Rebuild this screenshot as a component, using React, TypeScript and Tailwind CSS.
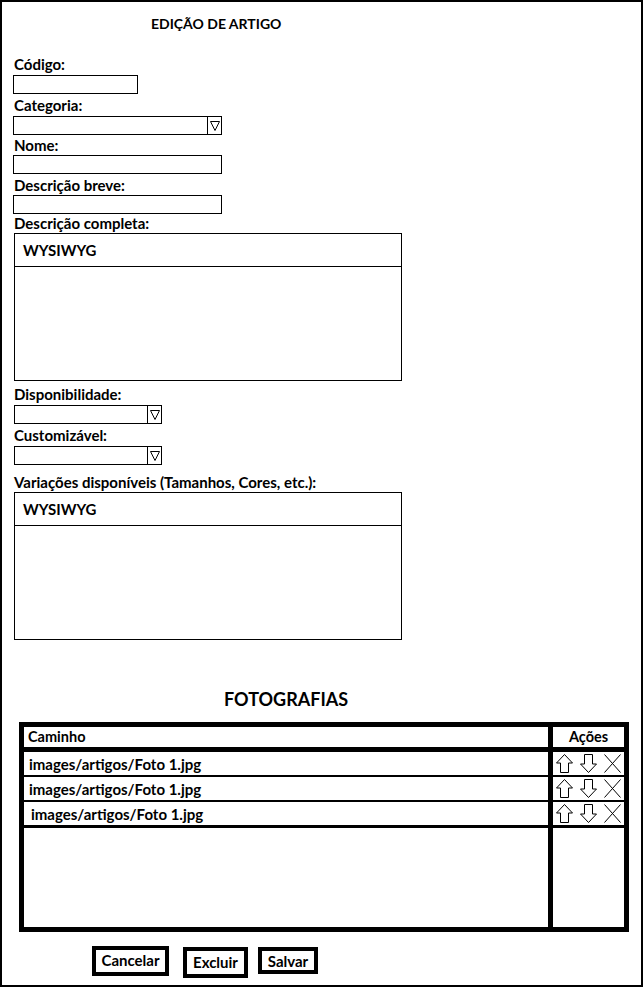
import React from "react";

const Tri = () => (
  <svg width="10" height="10" viewBox="0 0 10 10">
    <polygon points="0.5,0.5 9.5,0.5 5,9.5" fill="none" stroke="black" strokeWidth="1" />
  </svg>
);

const Select = ({ w }: { w: string }) => (
  <div className={`flex h-[19px] ${w} border border-black`}>
    <div className="flex-1" />
    <div className="flex w-[14px] items-center justify-center border-l border-black pt-px">
      <Tri />
    </div>
  </div>
);

const Label = ({ children, cls }: { children: React.ReactNode; cls: string }) => (
  <div className={`ml-px h-[16px] whitespace-nowrap text-[15px] leading-[16px] ${cls}`}>{children}</div>
);

const Wysiwyg = () => (
  <div className="ml-px flex h-[148px] w-[388px] flex-col border border-black">
    <div className="flex h-[33px] items-center border-b border-black pl-[8px] text-[15px] leading-[16px]">
      WYSIWYG
    </div>
  </div>
);

const Up = () => (
  <svg width="17" height="19" viewBox="0 0 17 19">
    <polygon
      points="8.5,0.5 16.5,9 12.5,9 12.5,18.5 4.5,18.5 4.5,9 0.5,9"
      fill="none"
      stroke="black"
      strokeWidth="1"
    />
  </svg>
);

const Down = () => (
  <svg width="17" height="19" viewBox="0 0 17 19">
    <polygon
      points="4.5,0.5 12.5,0.5 12.5,10 16.5,10 8.5,18.5 0.5,10 4.5,10"
      fill="none"
      stroke="black"
      strokeWidth="1"
    />
  </svg>
);

const Xi = () => (
  <svg width="17" height="19" viewBox="0 0 17 19">
    <line x1="0.5" y1="0.5" x2="16.5" y2="18.5" stroke="black" strokeWidth="1" />
    <line x1="16.5" y1="0.5" x2="0.5" y2="18.5" stroke="black" strokeWidth="1" />
  </svg>
);

const Row = ({ pl, mt }: { pl: string; mt: string }) => (
  <div className={`grid grid-cols-[524px_71px] gap-x-[5px] ${mt}`}>
    <div className={`flex h-[23px] items-center bg-white text-[15px] leading-[16px] ${pl}`}>
      images/artigos/Foto 1.jpg
    </div>
    <div className="flex h-[23px] items-center gap-[7px] bg-white pl-[3px]">
      <Up />
      <Down />
      <Xi />
    </div>
  </div>
);

export default function App() {
  return (
    <div className="flex h-[987px] w-[643px] flex-col border-2 border-black bg-white font-['Lato',sans-serif] font-bold text-black">
      <div className="ml-[149px] mt-[14px] h-[16px] text-[14px] leading-[16px]">EDIÇÃO DE ARTIGO</div>

      <div className="flex flex-col pl-[11px]">
        <Label cls="mt-[24px] mb-[3px]">Código:</Label>
        <div className="h-[19px] w-[125px] border border-black" />

        <Label cls="mt-[3px] mb-[3px]">Categoria:</Label>
        <Select w="w-[209px]" />

        <Label cls="mt-[2px] mb-[2px]">Nome:</Label>
        <div className="h-[19px] w-[209px] border border-black" />

        <Label cls="mt-[3px] mb-[2px]">Descrição breve:</Label>
        <div className="h-[19px] w-[209px] border border-black" />

        <Label cls="mt-[1px] mb-[2px]">Descrição completa:</Label>
        <Wysiwyg />

        <Label cls="mt-[5px] mb-[3px]">Disponibilidade:</Label>
        <div className="ml-px">
          <Select w="w-[148px]" />
        </div>

        <Label cls="mt-[3px] mb-[3px]">Customizável:</Label>
        <div className="ml-px">
          <Select w="w-[148px]" />
        </div>

        <Label cls="mt-[9px] mb-[2px]">Variações disponíveis (Tamanhos, Cores, etc.):</Label>
        <Wysiwyg />
      </div>

      <div className="ml-[222px] mt-[48px] h-[22px] text-[18px] leading-[22px]">FOTOGRAFIAS</div>

      <div className="ml-[17px] mt-[12px] w-[610px] bg-black p-[5px]">
        <div className="grid grid-cols-[524px_71px] gap-x-[5px]">
          <div className="flex h-[20px] items-center bg-white pl-[4px] text-[14.5px] leading-[16px]">Caminho</div>
          <div className="flex h-[20px] items-center justify-center bg-white text-[14.5px] leading-[16px]">Ações</div>
        </div>
        <Row pl="pl-[5px]" mt="mt-[5px]" />
        <Row pl="pl-[5px]" mt="mt-[2px]" />
        <Row pl="pl-[7px]" mt="mt-[2px]" />
        <div className="mt-[3px] grid grid-cols-[524px_71px] gap-x-[5px]">
          <div className="h-[99px] bg-white" />
          <div className="h-[99px] bg-white" />
        </div>
      </div>

      <div className="ml-[90px] mt-[14px] flex items-start text-[15px] leading-[16px]">
        <div className="flex h-[30px] w-[77px] items-center justify-center border-4 border-black pb-[3px]">Cancelar</div>
        <div className="ml-[14px] mt-px flex h-[31px] w-[65px] items-center justify-center border-4 border-black pb-px">Excluir</div>
        <div className="ml-[10px] mt-[1px] flex h-[27px] w-[60px] items-center justify-center border-4 border-black">Salvar</div>
      </div>
    </div>
  );
}
